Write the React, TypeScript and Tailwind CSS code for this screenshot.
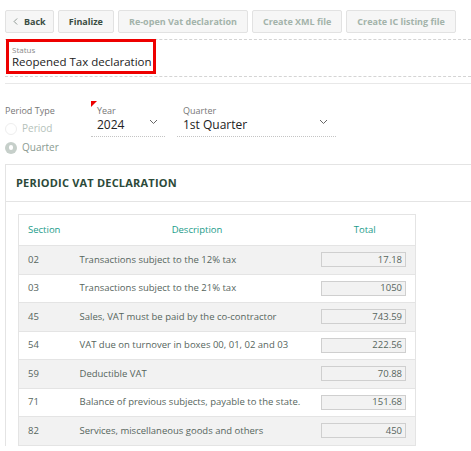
import { ChevronLeft } from "lucide-react";

const rows = [
  { section: "02", description: "Transactions subject to the 12% tax", total: "17.18" },
  { section: "03", description: "Transactions subject to the 21% tax", total: "1050" },
  { section: "45", description: "Sales, VAT must be paid by the co-contractor", total: "743.59" },
  { section: "54", description: "VAT due on turnover in boxes 00, 01, 02 and 03", total: "222.56" },
  { section: "59", description: "Deductible VAT", total: "70.88" },
  { section: "71", description: "Balance of previous subjects, payable to the state.", total: "151.68" },
  { section: "82", description: "Services, miscellaneous goods and others", total: "450" },
];

function Chevron() {
  return (
    <svg width="9" height="6" viewBox="0 0 9 6" className="mt-[2px] text-[#666]">
      <polyline points="1,1 4.5,4.5 8,1" fill="none" stroke="currentColor" strokeWidth="1" />
    </svg>
  );
}

function ToolButton({ label, disabled, back }: { label: string; disabled?: boolean; back?: boolean }) {
  return (
    <button
      className={`flex h-[23px] items-center gap-[3px] rounded-[2px] border border-[#e2e2e2] bg-[#f6f6f6] text-[9px] font-bold ${
        back ? "pl-[6px] pr-[7px]" : "px-[10px]"
      } ${disabled ? "text-[#a3b3aa]" : "text-[#3b4d43]"}`}
    >
      {back && <ChevronLeft className="-ml-[2px] h-[11px] w-[11px]" strokeWidth={1.2} />}
      {label}
    </button>
  );
}

export default function App() {
  return (
    <div className="h-[451px] w-[471px] overflow-hidden bg-white font-['Open_Sans',sans-serif] text-[#333]">
      <div className="flex gap-[4px] pl-[5px] pt-[10px]">
        <ToolButton label="Back" back />
        <ToolButton label="Finalize" />
        <ToolButton label="Re-open Vat declaration" disabled />
        <ToolButton label="Create XML file" disabled />
        <ToolButton label="Create IC listing file" disabled />
      </div>

      <div className="ml-[5px] mt-[6px] h-[38px] border-y border-dashed border-[#d4d4d4]">
        <div className="-mt-px ml-[1px] w-[150px] border-[3px] border-[#ee0000] bg-white px-[3px] pb-[2px] pt-[2px]">
          <div className="text-[8px] leading-[11px] text-[#8a8a8a]">Status</div>
          <div className="whitespace-nowrap text-[11.5px] leading-[14px] text-[#222]">Reopened Tax declaration</div>
        </div>
      </div>
      <div className="ml-[5px] mt-[6px] border-t border-[#e8e8e8]" />

      <div className="mt-[17px] flex pl-[5px]">
        <div className="w-[86px] pt-[4px]">
          <div className="text-[9px] leading-[12px] text-[#777]">Period Type</div>
          <div className="mt-[4px] flex items-center gap-[5px]">
            <span className="h-[12px] w-[12px] rounded-full border border-[#eeeeee]" />
            <span className="text-[10px] text-[#b5c2bb]">Period</span>
          </div>
          <div className="mt-[4px] flex items-center gap-[5px]">
            <span className="flex h-[12px] w-[12px] items-center justify-center rounded-full bg-[#c6cfca]">
              <span className="h-[5px] w-[4px] rounded-full bg-white" />
            </span>
            <span className="text-[10px] text-[#8a9a91]">Quarter</span>
          </div>
        </div>

        <div className="relative h-[36px] w-[74px] border-b border-dotted border-[#c4c4c4] pl-[6px] pt-[4px]">
          <span className="absolute left-0 top-0 h-0 w-0 border-r-[6px] border-t-[6px] border-r-transparent border-t-[#ee0000]" />
          <div className="text-[9px] leading-[12px] text-[#777]">Year</div>
          <div className="flex h-[15px] items-start justify-between pr-[7px]">
            <span className="text-[12px] leading-[15px] text-[#222]">2024</span>
            <Chevron />
          </div>
        </div>

        <div className="ml-[12px] h-[36px] w-[159px] border-b border-dotted border-[#c4c4c4] pl-[6px] pt-[4px]">
          <div className="text-[9px] leading-[12px] text-[#777]">Quarter</div>
          <div className="flex h-[15px] items-start justify-between pr-[8px]">
            <span className="text-[12px] leading-[15px] text-[#222]">1st Quarter</span>
            <Chevron />
          </div>
        </div>
      </div>

      <div className="ml-[5px] mt-[9px] border-l border-t border-[#e4e4e4]">
        <div className="flex h-[37px] items-center border-b border-[#e4e4e4] pl-[10px] text-[11px] font-bold tracking-[0.2px] text-[#2c4a39]">
          PERIODIC VAT DECLARATION
        </div>
        <div className="pl-[12px] pt-[12px]">
          <table className="w-[398px] border-collapse border border-[#e4e4e4] text-[9.5px]">
            <thead>
              <tr className="h-[31px] border-b border-[#e4e4e4] text-[#1c9c8a]">
                <th className="w-[61px] pl-[9px] text-left font-normal">Section</th>
                <th className="w-[235px] text-center font-normal">Description</th>
                <th className="text-center font-normal">Total</th>
              </tr>
            </thead>
            <tbody>
              {rows.map((r, i) => (
                <tr
                  key={r.section}
                  className={`h-[28.5px] border-b border-[#e4e4e4] text-[#56655d] ${i % 2 === 0 ? "bg-[#f2f2f2]" : "bg-white"}`}
                >
                  <td className="pl-[9px]">{r.section}</td>
                  <td className="whitespace-nowrap">{r.description}</td>
                  <td className="pr-[9px]">
                    <div className="ml-auto flex h-[15px] w-[85px] items-center justify-end border border-[#cfcfcf] bg-[#f2f2f2] pr-[3px] text-[#56655d]">
                      {r.total}
                    </div>
                  </td>
                </tr>
              ))}
            </tbody>
          </table>
        </div>
      </div>
    </div>
  );
}
